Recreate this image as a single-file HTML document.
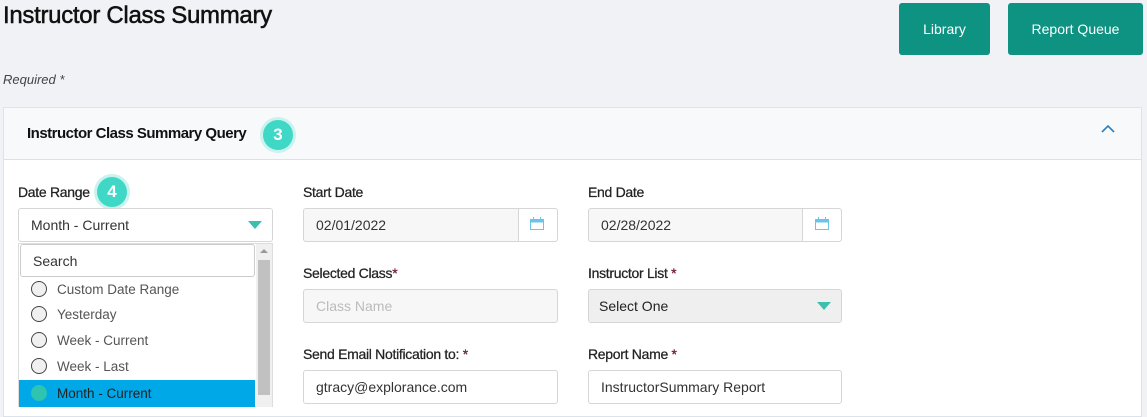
<!DOCTYPE html>
<html><head><style>
*{box-sizing:border-box;margin:0;padding:0}
body{width:1147px;height:407px;overflow:hidden;background:#f0f2f6;font-family:"Liberation Sans",sans-serif;color:#222;position:relative}
.a{position:absolute}
.btn{background:#0e9282;color:#fff;border-radius:3px;font-size:14px;display:flex;align-items:center;justify-content:center}
.lbl{font-size:14px;color:#222;letter-spacing:-0.3px;-webkit-text-stroke:0.25px #222}
.req{color:#b0143c}
.inp{position:absolute;height:34px;border:1px solid #d6d6d6;border-radius:3px;background:#fff;font-size:14px;color:#333;padding-left:12px;display:flex;align-items:center}
.badge{position:absolute;width:30px;height:30px;border-radius:50%;background:#3fd8c6;color:#fff;font-weight:bold;font-size:17px;display:flex;align-items:center;justify-content:center;box-shadow:0 0 0 3px #c9f3ee}
.tri{width:0;height:0;border-left:7px solid transparent;border-right:7px solid transparent;border-top:8px solid #3bbfb0;position:absolute}
.opt{position:absolute;left:19px;width:236px;height:26px;font-size:13.5px;color:#555;display:flex;align-items:center;padding-left:38px}
.opt i{position:absolute;left:12px;top:5px;width:16px;height:16px;border-radius:50%;border:1px solid #444;background:#f0f0f0}
</style></head><body>
<div class="a" style="left:3px;top:2px;font-size:24px;color:#111;letter-spacing:-0.3px;-webkit-text-stroke:0.5px #111">Instructor Class Summary</div>
<div class="a btn" style="left:899px;top:3px;width:91px;height:52px">Library</div>
<div class="a btn" style="left:1008px;top:3px;width:135px;height:52px">Report Queue</div>
<div class="a" style="left:3px;top:72px;font-size:13px;font-style:italic;color:#444">Required *</div>
<div class="a" style="left:3px;top:107px;width:1139px;height:310px;background:#fff;border:1px solid #dde3ea"></div>
<div class="a" style="left:4px;top:108px;width:1137px;height:52px;background:#f8f9fa;border-bottom:1px solid #e3e0dc"></div>
<div class="a" style="left:27px;top:125px;font-size:15px;font-weight:bold;color:#111;letter-spacing:-0.5px">Instructor Class Summary Query</div>
<div class="badge" style="left:263px;top:120px">3</div>
<svg class="a" style="left:1101px;top:125px" width="14" height="9"><path d="M1 7 L7 1 L13 7" fill="none" stroke="#2a7fc0" stroke-width="1.6"/></svg>

<div class="a lbl" style="left:18px;top:184px">Date Range</div>
<div class="badge" style="left:97px;top:177px">4</div>
<div class="inp" style="left:18px;top:208px;width:255px">Month - Current</div>
<div class="tri" style="left:248px;top:221px"></div>
<div class="a" style="left:18px;top:243px;width:255px;height:164px;background:#fff;border:1px solid #ddd"></div>
<div class="a" style="left:256px;top:244px;width:16px;height:163px;background:#f0f0f0"></div>
<div class="a" style="left:258px;top:260px;width:12px;height:135px;background:#c1c1c1"></div>
<div class="a" style="left:260px;top:249px;width:0;height:0;border-left:4px solid transparent;border-right:4px solid transparent;border-bottom:4px solid #999"></div>
<div class="inp" style="left:20px;top:244px;width:235px;height:33px;border-color:#ccc;color:#333">Search</div>
<div class="opt" style="top:276px"><i></i>Custom Date Range</div>
<div class="opt" style="top:301px"><i></i>Yesterday</div>
<div class="opt" style="top:327px"><i></i>Week - Current</div>
<div class="opt" style="top:353px"><i></i>Week - Last</div>
<div class="opt" style="top:380px;background:#00a8e8;color:#222;height:27px"><i style="background:#2ec4b0;border-color:#2ec4b0"></i>Month - Current</div>

<div class="a lbl" style="left:303px;top:184px">Start Date</div>
<div class="inp" style="left:303px;top:208px;width:255px;background:#f7f7f7">02/01/2022</div>
<div class="a" style="left:518px;top:209px;width:39px;height:32px;background:#fff;border-left:1px solid #d6d6d6;border-radius:0 3px 3px 0"></div>
<svg class="a" style="left:530px;top:217px" width="14" height="14"><rect x="0.5" y="2.5" width="13" height="10" fill="none" stroke="#6cc3ea"/><rect x="0.5" y="2.5" width="13" height="3" fill="#6cc3ea"/><path d="M3.5 0v3M10.5 0v3" stroke="#6cc3ea"/></svg>
<div class="a lbl" style="left:588px;top:184px">End Date</div>
<div class="inp" style="left:588px;top:208px;width:254px;background:#f7f7f7">02/28/2022</div>
<div class="a" style="left:802px;top:209px;width:39px;height:32px;background:#fff;border-left:1px solid #d6d6d6;border-radius:0 3px 3px 0"></div>
<svg class="a" style="left:815px;top:217px" width="14" height="14"><rect x="0.5" y="2.5" width="13" height="10" fill="none" stroke="#6cc3ea"/><rect x="0.5" y="2.5" width="13" height="3" fill="#6cc3ea"/><path d="M3.5 0v3M10.5 0v3" stroke="#6cc3ea"/></svg>

<div class="a lbl" style="left:303px;top:265px">Selected Class<span class="req">*</span></div>
<div class="inp" style="left:303px;top:289px;width:255px;background:#f7f7f7;color:#bbb">Class Name</div>
<div class="a lbl" style="left:588px;top:265px">Instructor List <span class="req">*</span></div>
<div class="inp" style="left:588px;top:289px;width:254px;background:#efefef;color:#222;padding-left:10px">Select One</div>
<div class="tri" style="left:817px;top:302px"></div>

<div class="a lbl" style="left:303px;top:346px">Send Email Notification to: <span class="req">*</span></div>
<div class="inp" style="left:303px;top:370px;width:255px">gtracy@explorance.com</div>
<div class="a lbl" style="left:588px;top:346px">Report Name <span class="req">*</span></div>
<div class="inp" style="left:588px;top:370px;width:254px">InstructorSummary Report</div>
</body></html>
